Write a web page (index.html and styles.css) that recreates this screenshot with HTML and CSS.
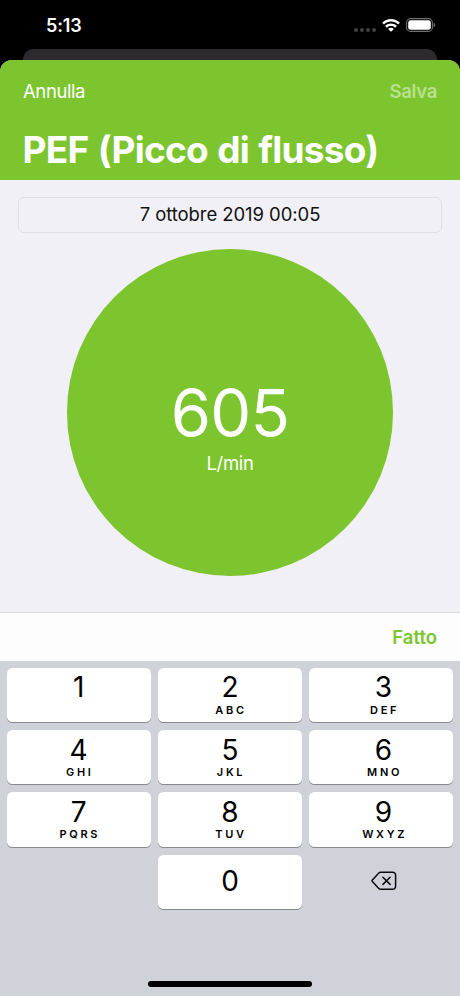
FILE: index.html
```html
<!DOCTYPE html>
<html lang="it">
<head>
<meta charset="utf-8">
<title>PEF</title>
<link rel="stylesheet" href="styles.css">
</head>
<body>
<div class="phone">
  <header class="status">
    <span class="time">5:13</span>
    <div class="indicators">
      <div class="dots"><i></i><i></i><i></i><i></i></div>
      <svg class="wifi" width="18" height="14" viewBox="0 0 18 14" fill="#fff">
        <path d="M9 0C12.4 0 15.4 1.3 17.6 3.4c.2.2.2.4 0 .6l-1.2 1.2c-.2.2-.4.2-.6 0C14 3.500 11.600 2.600 9 2.600S4 3.500 2.200 5.200c-.2.2-.4.2-.6 0L.4 4c-.2-.2-.2-.4 0-.6C2.600 1.300 5.600 0 9 0Z"/>
        <path d="M9 4.400c2.100 0 4.100.8 5.600 2.200.2.2.2.4 0 .6l-1.200 1.200c-.2.2-.4.2-.6 0C11.800 7.500 10.500 7 9 7s-2.800.5-3.800 1.400c-.2.2-.4.2-.6 0L3.400 7.200c-.2-.2-.2-.4 0-.6C4.900 5.200 6.900 4.400 9 4.400Z"/>
        <path d="M9 8.700c1 0 1.900.4 2.600 1 .2.2.2.4 0 .6l-2.300 2.300c-.2.2-.4.2-.6 0l-2.300-2.300c-.2-.2-.2-.4 0-.6.7-.6 1.600-1 2.600-1Z"/>
      </svg>
      <svg class="battery" width="30" height="14" viewBox="0 0 30 14">
        <rect x=".6" y=".6" width="25.800" height="12.800" rx="4" fill="none" stroke="#707070" stroke-width="1.100"/>
        <rect x="2.200" y="2.200" width="22.600" height="9.600" rx="2.500" fill="#fff"/>
        <path d="M27.600 4.700c1 .4 1.600 1.300 1.600 2.300s-.6 1.900-1.600 2.300Z" fill="#707070"/>
      </svg>
    </div>
  </header>
  <div class="back-card"></div>
  <main class="sheet">
    <div class="nav">
      <div class="nav-row"><span class="cancel">Annulla</span><span class="save">Salva</span></div>
      <h1 class="title">PEF (Picco di flusso)</h1>
    </div>
    <div class="content">
      <div class="date"><span>7 ottobre 2019 00:05</span></div>
      <div class="circle">
        <span class="value">605</span>
        <span class="unit">L/min</span>
      </div>
    </div>
    <div class="toolbar"><span class="done">Fatto</span></div>
    <div class="keyboard">
      <div class="keys">
        <div class="key"><b>1</b></div>
        <div class="key"><b>2</b><small>ABC</small></div>
        <div class="key"><b>3</b><small>DEF</small></div>
        <div class="key"><b>4</b><small>GHI</small></div>
        <div class="key"><b>5</b><small>JKL</small></div>
        <div class="key"><b>6</b><small>MNO</small></div>
        <div class="key"><b>7</b><small>PQRS</small></div>
        <div class="key"><b>8</b><small>TUV</small></div>
        <div class="key"><b>9</b><small>WXYZ</small></div>
        <div></div>
        <div class="key zero"><b>0</b></div>
        <div class="delete">
          <svg width="26" height="20" viewBox="0 0 26 20" fill="none" stroke="#0b0b0d" stroke-width="1.500" stroke-linecap="round" stroke-linejoin="round">
            <path d="M9.700 1.200H21.600a3 3 0 0 1 3 3V15.300a3 3 0 0 1-3 3H9.700a2.600 2.600 0 0 1-1.900-.8L1.400 10.600a1.200 1.200 0 0 1 0-1.700L7.800 2a2.600 2.600 0 0 1 1.900-.8Z"/>
            <path d="M11.900 6.200l7.200 7.200M19.100 6.200l-7.200 7.200"/>
          </svg>
        </div>
      </div>
      <div class="home"></div>
    </div>
  </main>
</div>
</body>
</html>
```
FILE: styles.css
```css
* { box-sizing: border-box; }

body {
  margin: 0;
  background: #000;
  font-family: Inter, "Liberation Sans", sans-serif;
}

.phone {
  width: 460px;
  height: 996px;
  display: flex;
  flex-direction: column;
  overflow: hidden;
}

.status {
  height: 49px;
  padding: 0 24px 0 46px;
  display: flex;
  justify-content: space-between;
  flex: none;
}

.time {
  color: #fff;
  font-size: 18px;
  font-weight: 600;
  line-height: 22px;
  margin-top: 15px;
  letter-spacing: -0.1px;
}

.indicators { display: flex; margin-top: 18px; }
.dots { display: flex; gap: 2.100px; margin: 10px 6px 0 0; }
.dots i { width: 4px; height: 4px; border-radius: 50%; background: #424242; }
.wifi { margin-top: 0.5px; }
.battery { margin-left: 6px; }

.back-card {
  height: 11px;
  margin: 0 23px;
  background: #2c2a2c;
  border-radius: 10px 10px 0 0;
  flex: none;
}

.sheet {
  flex: 1;
  display: flex;
  flex-direction: column;
  border-radius: 12px 12px 0 0;
  overflow: hidden;
  background: #f1f0f6;
}

.nav {
  height: 120px;
  background: #7cc52e;
  color: #fff;
  padding: 20px 23px 0;
  flex: none;
}

.nav-row {
  display: flex;
  justify-content: space-between;
  font-size: 18.500px;
  line-height: 23px;
}

.cancel { letter-spacing: -0.4px; }
.save { font-weight: 600; color: #b9e08e; letter-spacing: -0.3px; }

.title {
  margin: 24px 0 0 -0.5px;
  font-size: 37px;
  line-height: 46px;
  font-weight: 700;
  letter-spacing: -0.75px;
  word-spacing: 1.2px;
  white-space: nowrap;
}

.content {
  height: 432px;
  padding: 17px 18px 0;
  display: flex;
  flex-direction: column;
  align-items: center;
  flex: none;
}

.date {
  width: 100%;
  height: 36px;
  border: 1px solid #dfdfe5;
  border-radius: 6px;
  font-size: 18.500px;
  line-height: 32px;
  letter-spacing: -0.07px;
  text-align: center;
  color: #111;
}

.circle {
  width: 326.5px;
  height: 326.5px;
  margin-top: 16px;
  border-radius: 50%;
  background: #7cc52e;
  color: #fff;
  display: flex;
  flex-direction: column;
  align-items: center;
  padding-top: 124px;
}

.value { font-size: 65px; line-height: 79px; letter-spacing: -0.8px; }
.unit { font-size: 18.500px; line-height: 23px; letter-spacing: -0.3px; }

.toolbar {
  height: 49px;
  border-top: 1px solid #d7d7da;
  background: #fdfdfe;
  display: flex;
  justify-content: flex-end;
  padding: 13px 23px 0;
  color: #7cc52e;
  font-size: 18.500px;
  line-height: 23px;
  font-weight: 600;
  flex: none;
}

.keyboard {
  flex: 1;
  background: #d0d2da;
  padding: 7px 7px 0;
  display: flex;
  flex-direction: column;
  align-items: center;
}

.keys {
  width: 100%;
  display: grid;
  grid-template-columns: repeat(3, 1fr);
  grid-auto-rows: 54.300px;
  gap: 7.900px 6.500px;
}

.key {
  background: #fff;
  border-radius: 5.500px;
  box-shadow: 0 1px 0 #898a8e;
  display: flex;
  flex-direction: column;
  align-items: center;
  padding-top: 2.4px;
  color: #000;
}

.key:nth-child(3n + 1) { padding-right: 1px; }
.key:nth-child(3n) { padding-left: 5.400px; }

.key b { font-size: 28px; line-height: 34px; font-weight: 400; }
.key small {
  font-size: 11px;
  line-height: 14px;
  font-weight: 600;
  letter-spacing: 2.700px;
  margin: -1.600px -2.200px 0 0;
}
.zero { padding-top: 9px; }

.delete { display: flex; justify-content: center; padding: 16px 0 0 7px; }

.home {
  width: 164px;
  height: 6px;
  border-radius: 3px;
  background: #000;
  margin-top: 72px;
}
```
